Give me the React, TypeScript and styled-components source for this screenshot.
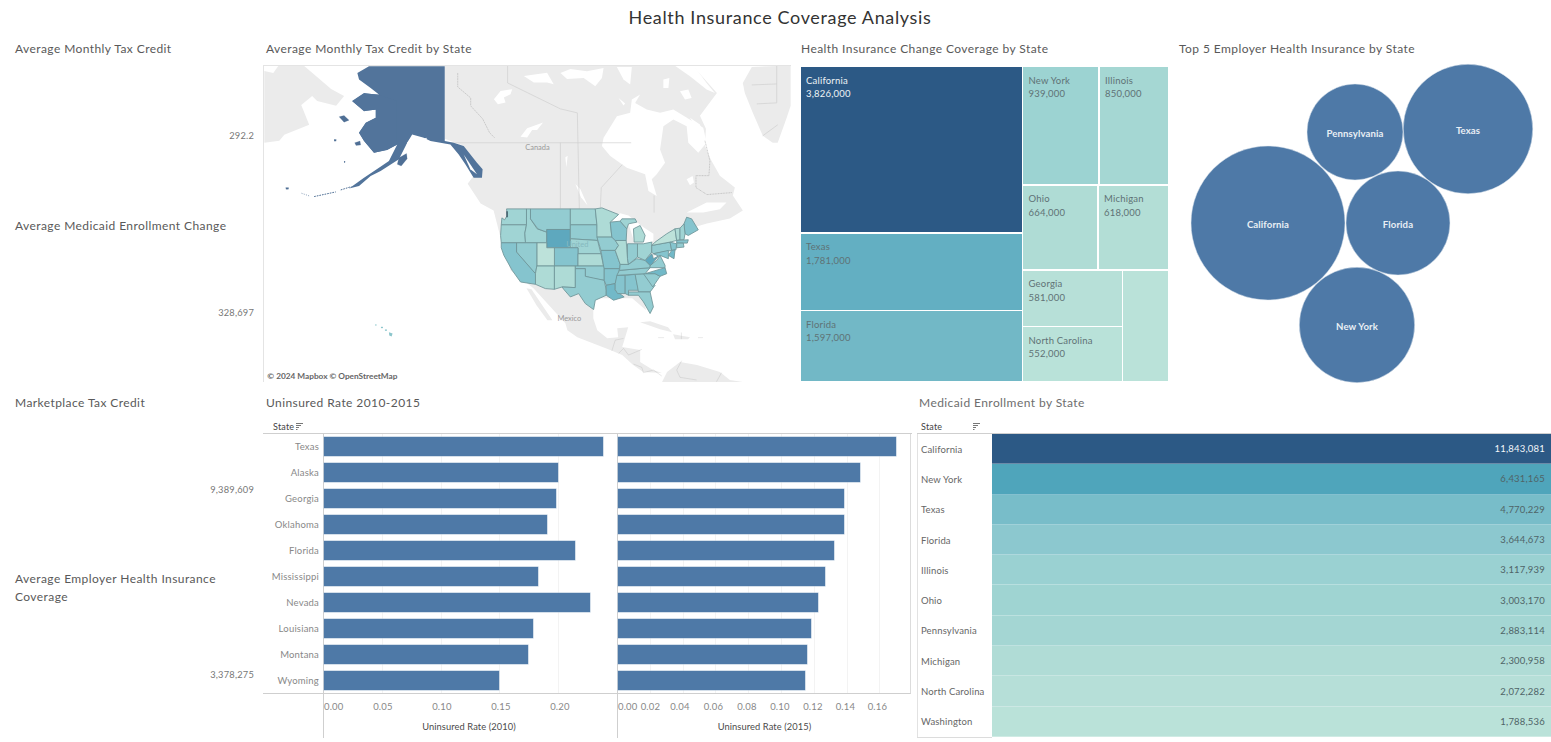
import React from "react";
import styled, { createGlobalStyle } from "styled-components";

const Global = createGlobalStyle`
  html, body { margin: 0; padding: 0; background: #fff; overflow: hidden; }
  body { font-family: Lato, "Open Sans", "Liberation Sans", sans-serif; }
`;

const Page = styled.div`
  width: 1551px;
  height: 742px;
  display: flex;
  flex-direction: column;
  overflow: hidden;
  background: #fff;
`;
const Heading = styled.h1`
  flex: 0 0 36px;
  margin: 0;
  text-align: center;
  font-size: 18px;
  line-height: 35px;
  font-weight: 400;
  letter-spacing: 0.65px;
  color: #333;
  padding-left: 9px;
`;
const Row = styled.div<{ $h: number }>`
  flex: 0 0 ${(p) => p.$h}px;
  display: flex;
  min-height: 0;
`;
const KpiColumn = styled.div`
  flex: 0 0 263px;
  display: flex;
  flex-direction: column;
`;
const Kpi = styled.div`
  flex: 1 1 0;
  display: flex;
  flex-direction: column;
  padding: 4px 9px 0 15px;
`;
const PanelTitle = styled.div<{ $muted?: boolean }>`
  font-size: 12px;
  line-height: 18px;
  letter-spacing: 0.42px;
  color: ${(p) => (p.$muted ? "#6e6e6e" : "#595959")};
  white-space: nowrap;
`;
const KpiTitle = styled(PanelTitle)`
  white-space: normal;
  max-width: 215px;
`;
const KpiValue = styled.div`
  flex: 1;
  display: flex;
  align-items: center;
  justify-content: flex-end;
  font-size: 9.3px;
  letter-spacing: 0.2px;
  color: #777;
`;
const Panel = styled.div<{ $w?: number }>`
  flex: ${(p) => (p.$w ? `0 0 ${p.$w}px` : "1 1 0")};
  display: flex;
  flex-direction: column;
  min-width: 0;
`;
const TitleLine = styled.div<{ $indent: number }>`
  padding: 4px 0 0 ${(p) => p.$indent}px;
  height: 26px;
  box-sizing: border-box;
`;
const MapFrame = styled.svg`
  display: block;
  width: 528px;
  height: 317px;
  margin-top: 3px;
  border-top: 1px solid #e4e4e4;
  border-left: 1px solid #e4e4e4;
  box-sizing: border-box;
`;

const Treemap = styled.div`
  display: flex;
  gap: 1.5px;
  width: 367px;
  height: 314px;
  margin: 5px 0 0 0.5px;
`;
const TreeColumn = styled.div<{ $w: number }>`
  flex: 0 0 ${(p) => p.$w}px;
  display: flex;
  flex-direction: column;
  gap: 1.5px;
`;
const TreeRow = styled.div<{ $h: number }>`
  flex: 0 0 ${(p) => p.$h}px;
  display: flex;
  gap: 1.5px;
`;
const Tile = styled.div<{ $bg: string; $light?: boolean; $size: number }>`
  flex: ${(p) => `0 0 ${p.$size}px`};
  background: ${(p) => p.$bg};
  color: ${(p) => (p.$light ? "#eef3f6" : "#5f7275")};
  font-size: 9.5px;
  line-height: 13.5px;
  letter-spacing: 0.2px;
  padding: 6.5px 0 0 5.5px;
  box-sizing: border-box;
  white-space: pre-line;
  overflow: hidden;
`;
const BubbleSvg = styled.svg`
  display: block;
  width: 372px;
  height: 326px;
`;
const BubbleLabel = styled.text`
  font-size: 9.6px;
  font-weight: 700;
  letter-spacing: 0.1px;
  fill: #e9eff5;
  text-anchor: middle;
  dominant-baseline: middle;
`;

const Chart = styled.div`
  display: flex;
  flex-direction: column;
  width: 649px;
  margin-top: 4px;
`;
const ChartHeader = styled.div`
  height: 12px;
  padding-left: 10px;
  display: flex;
  align-items: center;
  gap: 2px;
  font-size: 9px;
  letter-spacing: 0.2px;
  color: #444;
  border-bottom: 1px solid #cfcfcf;
  padding-bottom: 1px;
`;
const SortGlyph = styled.svg`
  width: 8px;
  height: 7px;
  display: block;
`;
const ChartBody = styled.div`
  display: grid;
  grid-template-columns: 60px 294px 294px;
  grid-template-rows: 260px 44px;
`;
const StateLabels = styled.div`
  display: flex;
  flex-direction: column;
  border-bottom: 1px solid #cfcfcf;
`;
const StateLabel = styled.div`
  flex: 1;
  display: flex;
  align-items: center;
  justify-content: flex-end;
  padding-right: 4px;
  font-size: 9.5px;
  letter-spacing: 0.2px;
  color: #888;
`;
const Plot = styled.div<{ $step: number; $edge?: boolean }>`
  display: flex;
  flex-direction: column;
  border-left: 1px solid #cfcfcf;
  border-bottom: 1px solid #cfcfcf;
  ${(p) => (p.$edge ? "border-right: 1px solid #dcdcdc;" : "")}
  background-image: repeating-linear-gradient(
    to right,
    transparent 0,
    transparent ${(p) => p.$step - 1}px,
    #f3f3f3 ${(p) => p.$step - 1}px,
    #f3f3f3 ${(p) => p.$step}px
  );
`;
const BarRow = styled.div`
  flex: 1;
  display: flex;
  align-items: center;
`;
const Bar = styled.div`
  height: 19px;
  background: #4e79a7;
  box-shadow: 0 0 0 0.5px #a9bfd6;
`;
const AxisSpacer = styled.div``;
const Axis = styled.div<{ $pad?: number }>`
  border-left: 1px solid #cfcfcf;
  display: flex;
  flex-direction: column;
  padding-right: ${(p) => p.$pad ?? 0}px;
`;
const Ticks = styled.div`
  display: flex;
  height: 24px;
  align-items: center;
`;
const Tick = styled.div<{ $w: number; $after?: number }>`
  flex: 0 0 ${(p) => p.$w}px;
  margin-right: ${(p) => p.$after ?? 0}px;
  text-align: center;
  font-size: 9.5px;
  letter-spacing: 0.15px;
  color: #888;
`;
const AxisTitle = styled.div`
  font-size: 9.3px;
  text-align: center;
  color: #4a4a4a;
  letter-spacing: 0.1px;
  padding-top: 3px;
`;

const TableWrap = styled.div`
  display: flex;
  flex-direction: column;
  margin-top: 4px;
`;
const TableHeader = styled.div`
  height: 13px;
  width: 75px;
  box-sizing: border-box;
  display: flex;
  align-items: center;
  justify-content: space-between;
  padding: 0 11px 1px 4px;
  font-size: 9px;
  letter-spacing: 0.2px;
  color: #444;
`;
const Table = styled.div`
  display: flex;
  flex-direction: column;
  border-top: 1px solid #cfcfcf;
  height: 303px;
`;
const TableRow = styled.div`
  flex: 1;
  display: grid;
  grid-template-columns: 75px 1fr;
`;
const RowName = styled.div`
  display: flex;
  align-items: center;
  padding-left: 3px;
  font-size: 9.5px;
  letter-spacing: 0.15px;
  color: #666;
  border-left: 1px solid #e2e2e2;
`;
const RowBar = styled.div<{ $bg: string; $light?: boolean }>`
  display: flex;
  align-items: center;
  justify-content: flex-end;
  padding-right: 6px;
  font-size: 9.5px;
  letter-spacing: 0.2px;
  background: ${(p) => p.$bg};
  color: ${(p) => (p.$light ? "#f3f6f9" : "#4f6467")};
  border-bottom: 0.5px solid rgba(255, 255, 255, 0.3);
`;
const TableFoot = styled.div`
  width: 75px;
  border-top: 1px solid #dcdcdc;
`;

const rates = [
  ["Texas", 279, 278],
  ["Alaska", 234, 242],
  ["Georgia", 231.5, 226],
  ["Oklahoma", 222.5, 226],
  ["Florida", 251, 216],
  ["Mississippi", 214, 207],
  ["Nevada", 266, 200],
  ["Louisiana", 209, 193],
  ["Montana", 204, 189],
  ["Wyoming", 175, 187],
] as const;

const medicaid: [string, string, string][] = [
  ["California", "11,843,081", "#2c5985"],
  ["New York", "6,431,165", "#4fa5bb"],
  ["Texas", "4,770,229", "#78bdc9"],
  ["Florida", "3,644,673", "#8cc8cf"],
  ["Illinois", "3,117,939", "#9ad1d2"],
  ["Ohio", "3,003,170", "#9fd4d2"],
  ["Pennsylvania", "2,883,114", "#a4d6d3"],
  ["Michigan", "2,300,958", "#b0dcd6"],
  ["North Carolina", "2,072,282", "#b6dfd8"],
  ["Washington", "1,788,536", "#bae2d9"],
];

const C = {
  a: "#bde2da",
  b: "#aedbd6",
  c: "#a0d4d4",
  d: "#93ccd1",
  e: "#85c4ce",
  f: "#72b9c8",
  g: "#5ea8be",
};
const states: [string, string][] = [
  ["78,55 138,55 138,103 62,103 64,82 72,88 80,75", C.c],
  ["62,103 138,103 133,128 135,157 62,157 60,135", C.c],
  ["138,55 150,55 150,85 170,115 199,125 199,157 135,157 133,128 138,103", C.c],
  ["150,55 270,55 270,117 199,117 199,125 172,115 150,85", C.d],
  ["199,117 270,117 270,172 199,172", C.g],
  ["270,55 345,55 350,103 270,103", C.c],
  ["270,103 350,103 352,150 270,145", C.d],
  ["270,145 352,150 362,190 293,190 293,172 270,172", C.c],
  ["222,172 293,172 293,227 222,227", C.e],
  ["293,190 362,190 370,227 293,227", C.b],
  ["169,157 199,157 199,172 222,172 222,227 169,227", C.a],
  ["108,157 169,157 169,227 165,250 155,240 108,185", C.d],
  ["62,157 108,157 108,185 165,250 165,282 120,275 95,240 70,195 62,172", C.e],
  ["169,227 222,227 222,297 195,295 165,282 165,250", C.b],
  ["222,227 285,227 285,292 245,290 222,297", C.b],
  ["285,227 372,227 372,270 340,265 315,258 315,235 285,235", C.d],
  ["285,235 315,235 315,258 372,270 378,300 378,315 345,330 340,358 315,340 295,310 270,320 250,297 245,290 285,292", C.d],
  ["345,55 365,52 415,72 390,95 395,140 350,140 350,103", C.b],
  ["350,140 395,140 405,150 415,165 405,180 362,180", C.d],
  ["362,180 405,180 420,222 418,235 372,235 370,227", C.e],
  ["372,235 418,235 405,280 378,285 372,270", C.e],
  ["378,285 405,280 405,300 432,320 400,330 378,315", C.f],
  ["410,255 435,255 435,310 412,310 405,298 405,280", C.e],
  ["435,255 465,252 475,300 445,300 445,315 435,310", C.e],
  ["465,252 495,250 525,285 510,305 475,305", C.d],
  ["445,305 510,305 520,350 510,370 490,335 475,315 445,315", C.d],
  ["490,250 525,250 540,258 518,290", C.d],
  ["495,250 555,232 560,250 540,258 525,250", C.f],
  ["418,240 510,232 495,250 410,255", C.d],
  ["420,222 445,222 470,205 495,210 510,225 510,232 418,240", C.d],
  ["510,232 510,225 530,210 540,195 555,225 555,232", C.d],
  ["495,210 515,190 520,205 535,197 515,222 510,225", C.g],
  ["405,150 438,150 442,205 445,222 420,222 405,180 415,165", C.b],
  ["390,95 420,92 440,115 438,150 405,150 395,140", C.e],
  ["425,85 465,85 470,95 445,100 440,115 420,92", C.c],
  ["460,115 480,105 495,135 490,155 462,155", C.b],
  ["442,160 472,160 472,200 445,222 442,205", C.d],
  ["472,160 490,160 515,155 515,185 495,210 472,200", C.c],
  ["515,165 570,155 575,180 520,190 515,185", C.d],
  ["525,155 560,130 585,115 590,150 570,155 515,165", C.a],
  ["612,100 620,80 635,85 655,118 625,135 615,130", C.e],
  ["585,115 600,113 600,148 590,150", C.b],
  ["600,113 612,100 615,130 612,148 600,148", C.c],
  ["590,150 625,148 622,158 590,158", C.e],
  ["590,158 610,158 612,170 590,172", C.d],
  ["570,155 590,160 588,178 575,180", C.e],
  ["575,180 585,178 582,205 565,195", C.f],
  ["520,190 565,180 565,205 540,195 535,197", C.e],
];

const land = [
  "444,65 693,65 717,92 700,115 706,128 705,145 711,159 720,175 735,187 733,195 743,210 730,218 707,223 683,230 670,240 650,260 640,285 646,310 632,298 600,298 593,300 593,318 597,330 607,338 618,337 617,328 628,327 625,337 622,347 640,350 640,362 653,370 662,373 643,372 633,365 622,355 610,350 597,345 577,337 567,330 565,323 533,288 510,270 502,245 493,210 480,203 467,183 473,175 463,145 444,138",
  "662,382 667,372 680,362 697,365 720,372 730,380 743,382",
];

const Icon = () => (
  <SortGlyph viewBox="0 0 8 7">
    <path d="M0 .5h7M0 2.5h5M0 4.5h3M0 6.5h1.5" stroke="#777" strokeWidth="1" />
  </SortGlyph>
);

function MapChart() {
  return (
    <MapFrame viewBox="263 65 528 317">
      <g fill="#ebebeb">
        <polygon points="263,70 272,72 277,65 303,65 330,88 343,95 335,105 316,100 311,95 300,104 308,124 283,134 278,140 263,142" />
        {land.map((l) => (
          <polygon key={l} points={l} />
        ))}
        <polygon points="526,288 531,289 552,320 547,320 536,305" />
        <polygon points="743,82 752,66 777,65 791,65 791,105 787,117 778,142 773,142 763,135 753,112 745,92" />
        <polygon points="640,322 650,321 668,327 672,332 660,329" />
        <polygon points="673,334 690,337 688,339 675,339" />
        <rect x="658" y="337" width="6" height="1" />
        <rect x="698" y="337" width="5" height="1" />
      </g>
      <g fill="#fff">
        <g transform="translate(560 62) scale(0.3333)">
          <polygon points="130,225 170,160 210,150 215,110 240,95 225,120 260,140 300,150 340,140 430,195 440,240 415,270 385,240 380,190 340,170 310,190 300,260 315,300 290,335 275,350 290,400 265,385 255,335 200,315 150,280 125,250" />
          <polygon points="0,30 30,18 80,25 130,15 125,45 105,70 70,45 20,48" />
          <polygon points="170,12 215,12 210,65 190,50" />
          <polygon points="340,5 400,5 440,60 465,90 440,80 390,40" />
          <polygon points="310,50 328,45 325,75 310,75" />
          <polygon points="360,85 385,80 395,105 375,110" />
          <polygon points="175,105 195,122 190,128" />
          <polygon points="240,185 258,178 255,195 240,195" />
          <polygon points="380,350 398,340 402,360 390,368" />
          <polygon points="390,165 420,185 425,198 405,190" />
          <polygon points="380,450 440,420 500,420 480,440 430,450" />
        </g>
        <g transform="translate(260 40) scale(0.3333)">
          <polygon points="700,175 720,150 755,145 750,160 730,170 735,185 712,190" />
          <polygon points="780,288 800,262 848,245 830,268 815,268 800,290" />
          <polygon points="945,430 960,445 982,495 962,470" />
          <polygon points="790,105 860,95 880,130 860,125 820,125" />
          <polygon points="915,350 922,345 918,380" />
        </g>
      </g>
      <g fill="none" stroke="#cfcfcf" strokeWidth="0.7">
        <path d="M444,142 H631 M507,65 V82 L560,108 L577,112 L579,208 M560,142 V208 M622,164 L601,187 L600,209 M654,195 V212" />
        <path d="M777,65 V102 L757,103 M752,84 L777,83 M778,124 L763,135" />
        <path d="M457,72 L457,86 L470,97 L470,105 L482,118 L489,132 L494,137" stroke="#bdbdbd" strokeDasharray="2 0.6" />
        <path d="M705,140 L710,160 L709,175 L696,175 L696,187 L707,194 L732,192" stroke="#a9a9a9" strokeWidth="0.6" strokeDasharray="1 0.6" />
      </g>
      <g fill="none" stroke="#9b9b9b" strokeWidth="0.7" transform="translate(540 290) scale(0.3333)">
        <path d="M250,145 L225,150 L215,182 M235,190 L250,175 L265,195 L305,178" />
        <path d="M424,127 V147 M280,222 L305,232 L310,248 L340,240 L365,258" />
        <path d="M425,212 L410,240 L420,262 L470,270 M545,248 L530,275" />
      </g>
      <g transform="translate(480 190) scale(0.3333)">
        <polygon points="395,90 420,68 445,75 490,110 520,130 520,150 495,165 462,155 445,100" fill="#fff" />
        <g stroke="#6f9599" strokeWidth="2.6" strokeLinejoin="round">
          {states.map(([p, c]) => (
            <polygon key={p} points={p} fill={c} />
          ))}
        </g>
        <polygon points="77,62 82,62 82,80 77,80" fill="#47636f" />
      </g>
      <g fill="#8cc6cc" transform="translate(260 40) scale(0.3333)">
        <rect x="342" y="853" width="5" height="3" />
        <rect x="360" y="860" width="6" height="4" />
        <rect x="372" y="868" width="6" height="4" />
        <polygon points="384,876 395,880 392,889 385,886" />
      </g>
      <g transform="translate(263 62) scale(0.3333)">
        <path
          fill="#52749b"
          d="M315,10 H543 V235 L570,240 L600,250 L640,300 L657,320 L655,345 L630,345 L605,305 L585,275 L560,245 L530,240 L500,235 L480,225 L445,215 L430,240 L405,290 L350,325 L320,340 L285,370 L255,378 L300,345 L345,315 L375,295 L400,245 L370,262 L330,270 L300,235 L285,210 L305,180 L335,165 L335,140 L300,145 L265,115 L300,92 L345,95 L320,75 L285,50 L280,30 Z"
        />
        <g fill="#4f6f95" stroke="#4f6f95" strokeWidth="0.5">
          <polygon points="225,162 240,158 255,172 240,178" />
          <polygon points="272,240 288,235 290,247 276,248" />
          <polygon points="400,305 405,285 428,272 430,288 412,310" />
          <rect x="210" y="230" width="6" height="5" />
          <rect x="240" y="297" width="3" height="3" />
          <rect x="65" y="375" width="8" height="5" />
          <path d="M150,402 L215,388 M230,382 L262,372" fill="none" strokeWidth="3" strokeDasharray="5 3" />
          <path d="M112,392 L135,400" fill="none" strokeWidth="2" strokeDasharray="3 4" />
        </g>
        <g fill="#fff">
          <polygon points="430,240 447,218 450,222 425,262" />
          <polygon points="465,232 490,225 480,240" />
          <polygon points="600,275 640,335 620,320" />
        </g>
      </g>
      <text x="537" y="149" fontSize="7.5" textAnchor="middle" fill="#9a9a9a" fontFamily="Lato, sans-serif">Canada</text>
      <text x="569" y="321" fontSize="7.5" textAnchor="middle" fill="#9a9a9a" fontFamily="Lato, sans-serif">Mexico</text>
      <text x="577" y="247" fontSize="7.5" textAnchor="middle" fill="#86b9bf" fontFamily="Lato, sans-serif">United</text>
      <text x="266" y="379" fontSize="8.3" fontWeight="700" fill="#666" fontFamily="Lato, sans-serif">© 2024 Mapbox  © OpenStreetMap</text>
      <g fill="#52749b">
        <polygon points="351,100 363,92 378,94 396,100 396,144 386,149 373,152 363,140 358,132 365,122 375,117 375,109 363,110" />
      </g>
    </MapFrame>
  );
}

function Bubbles() {
  const list: [string, number, number, number][] = [
    ["California", 89, 161, 77],
    ["Texas", 289, 67, 64.8],
    ["Pennsylvania", 176, 70, 48],
    ["Florida", 219, 161, 52],
    ["New York", 178, 263, 57.7],
  ];
  return (
    <BubbleSvg viewBox="0 0 372 326">
      {list.map(([n, x, y, r]) => (
        <g key={n}>
          <circle cx={x} cy={y} r={r} fill="#4e79a7" stroke="#dfe7ef" strokeWidth="0.5" />
          <BubbleLabel x={x} y={y + 3}>{n}</BubbleLabel>
        </g>
      ))}
    </BubbleSvg>
  );
}

export default function App() {
  return (
    <Page>
      <Global />
      <Heading>Health Insurance Coverage Analysis</Heading>
      <Row $h={354}>
        <KpiColumn>
          <Kpi>
            <KpiTitle>Average Monthly Tax Credit</KpiTitle>
            <KpiValue>292.2</KpiValue>
          </Kpi>
          <Kpi>
            <KpiTitle>Average Medicaid Enrollment Change</KpiTitle>
            <KpiValue>328,697</KpiValue>
          </Kpi>
        </KpiColumn>
        <Panel $w={537}>
          <TitleLine $indent={3}>
            <PanelTitle>Average Monthly Tax Credit by State</PanelTitle>
          </TitleLine>
          <MapChart />
        </Panel>
        <Panel $w={379}>
          <TitleLine $indent={1}>
            <PanelTitle>Health Insurance Change Coverage by State</PanelTitle>
          </TitleLine>
          <Treemap>
            <TreeColumn $w={221}>
              <Tile $bg="#2c5985" $light $size={165}>{"California\n3,826,000"}</Tile>
              <Tile $bg="#63afc2" $size={76}>{"Texas\n1,781,000"}</Tile>
              <Tile $bg="#72b8c6" $size={70}>{"Florida\n1,597,000"}</Tile>
            </TreeColumn>
            <TreeColumn $w={145}>
              <TreeRow $h={117}>
                <Tile $bg="#9cd3d2" $size={75}>{"New York\n939,000"}</Tile>
                <Tile $bg="#a5d7d3" $size={68.5}>{"Illinois\n850,000"}</Tile>
              </TreeRow>
              <TreeRow $h={83.5}>
                <Tile $bg="#afdcd5" $size={74}>{"Ohio\n664,000"}</Tile>
                <Tile $bg="#b3ded6" $size={69.5}>{"Michigan\n618,000"}</Tile>
              </TreeRow>
              <TreeRow $h={110.5}>
                <TreeColumn $w={98.5}>
                  <Tile $bg="#b7e0d8" $size={55}>{"Georgia\n581,000"}</Tile>
                  <Tile $bg="#b9e2d9" $size={54}>{"North Carolina\n552,000"}</Tile>
                </TreeColumn>
                <Tile $bg="#bae2d9" $size={45}>{""}</Tile>
              </TreeRow>
            </TreeColumn>
          </Treemap>
        </Panel>
        <Panel>
          <TitleLine $indent={0}>
            <PanelTitle>Top 5 Employer Health Insurance by State</PanelTitle>
          </TitleLine>
          <Bubbles />
        </Panel>
      </Row>
      <Row $h={352}>
        <KpiColumn>
          <Kpi>
            <KpiTitle>Marketplace Tax Credit</KpiTitle>
            <KpiValue>9,389,609</KpiValue>
          </Kpi>
          <Kpi>
            <KpiTitle>Average Employer Health Insurance Coverage</KpiTitle>
            <KpiValue>3,378,275</KpiValue>
          </Kpi>
        </KpiColumn>
        <Panel $w={654}>
          <TitleLine $indent={3}>
            <PanelTitle>Uninsured Rate 2010-2015</PanelTitle>
          </TitleLine>
          <Chart>
            <ChartHeader>
              State
              <Icon />
            </ChartHeader>
            <ChartBody>
              <StateLabels>
                {rates.map(([n]) => (
                  <StateLabel key={n}>{n}</StateLabel>
                ))}
              </StateLabels>
              <Plot $step={58.75}>
                {rates.map(([n, w]) => (
                  <BarRow key={n}>
                    <Bar style={{ width: w }} />
                  </BarRow>
                ))}
              </Plot>
              <Plot $step={32.8} $edge>
                {rates.map(([n, , w]) => (
                  <BarRow key={n}>
                    <Bar style={{ width: w }} />
                  </BarRow>
                ))}
              </Plot>
              <AxisSpacer />
              <Axis $pad={3}>
                <Ticks>
                  <Tick $w={18} $after={10}>0.00</Tick>
                  <Tick $w={59}>0.05</Tick>
                  <Tick $w={59}>0.10</Tick>
                  <Tick $w={59}>0.15</Tick>
                  <Tick $w={59}>0.20</Tick>
                </Ticks>
                <AxisTitle>Uninsured Rate (2010)</AxisTitle>
              </Axis>
              <Axis>
                <Ticks>
                  <Tick $w={18}>0.00</Tick>
                  <Tick $w={26}>0.02</Tick>
                  <Tick $w={33}>0.04</Tick>
                  <Tick $w={34}>0.06</Tick>
                  <Tick $w={33}>0.08</Tick>
                  <Tick $w={33}>0.10</Tick>
                  <Tick $w={33}>0.12</Tick>
                  <Tick $w={32}>0.14</Tick>
                  <Tick $w={32}>0.16</Tick>
                </Ticks>
                <AxisTitle>Uninsured Rate (2015)</AxisTitle>
              </Axis>
            </ChartBody>
          </Chart>
        </Panel>
        <Panel>
          <TitleLine $indent={2}>
            <PanelTitle $muted>Medicaid Enrollment by State</PanelTitle>
          </TitleLine>
          <TableWrap>
            <TableHeader>
              State
              <Icon />
            </TableHeader>
            <Table>
              {medicaid.map(([n, v, c], i) => (
                <TableRow key={n}>
                  <RowName>{n}</RowName>
                  <RowBar $bg={c} $light={i === 0}>{v}</RowBar>
                </TableRow>
              ))}
            </Table>
            <TableFoot />
          </TableWrap>
        </Panel>
      </Row>
    </Page>
  );
}
